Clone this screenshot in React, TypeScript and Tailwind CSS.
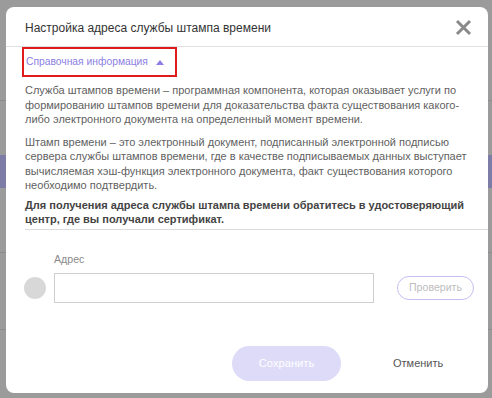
import React, { useState } from 'react';

const App: React.FC = () => {
  const [address, setAddress] = useState('');
  const [infoOpen, setInfoOpen] = useState(true);

  return (
    <div
      className="relative w-[492px] h-[398px] overflow-hidden bg-[#9b9b9b]"
      style={{ fontFamily: '"Liberation Sans", Arial, sans-serif' }}
    >
      {/* Page behind the overlay */}
      <div className="flex flex-col pt-[100px]">
        <div className="h-px bg-[#8c8c8c]" />
        <div className="h-[54px]" />
        <div className="w-full h-[33px] bg-[#7d7ca6]" />
        <div className="h-[64px]" />
        <div className="h-px bg-[#8c8c8c]" />
        <div className="h-[76px]" />
        <div className="h-px bg-[#8c8c8c]" />
      </div>

      {/* Dialog */}
      <div className="absolute left-[6px] top-[7px] w-[482px] h-[386px] bg-white rounded-[8px] flex flex-col">
        {/* Header */}
        <div className="flex items-center justify-between h-[40px] pl-[19px] pr-[16px] border-b border-[#e0e0e0]">
          <h2 className="text-[12px] text-[#333] pt-[2px]">Настройка адреса службы штампа времени</h2>
          <button className="pt-[2px]" aria-label="Закрыть">
            <svg width="17" height="17" viewBox="0 0 17 17">
              <path d="M2 2 L15 15 M15 2 L2 15" stroke="#8a8a8a" strokeWidth="3" />
            </svg>
          </button>
        </div>

        {/* Info */}
        <div className="pl-[16px] pr-[10px]">
          <button
            onClick={() => setInfoOpen(!infoOpen)}
            className="flex items-center gap-[8px] h-[30px] w-[155px] pl-[2px] border-2 border-[#e01b1b] text-[10.3px] text-[#8c7fe3]"
          >
            Справочная информация
            <svg width="8" height="5" viewBox="0 0 8 5">
              <path d="M0 5 L4 0 L8 5 Z" fill="#8c7fe3" />
            </svg>
          </button>
          {infoOpen && (
            <div className="pl-[3px] pt-[6px] text-[11px] leading-[14.5px] text-[#5f5f5f]">
              <p>
                Служба штампов времени – программная компонента, которая оказывает услуги по формированию штампов
                времени для доказательства факта существования какого-либо электронного документа на определенный
                момент времени.
              </p>
              <p className="mt-[8px]">
                Штамп времени – это электронный документ, подписанный электронной подписью сервера службы штампов
                времени, где в качестве подписываемых данных выступает вычисляемая хэш-функция электронного
                документа, факт существования которого необходимо подтвердить.
              </p>
              <p className="mt-[5px] font-bold text-[#444]">
                Для получения адреса службы штампа времени обратитесь в удостоверяющий центр, где вы получали
                сертификат.
              </p>
            </div>
          )}
        </div>
        <div className="ml-[19px] mt-[2px] h-px bg-[#dcdcdc]" />

        {/* Address */}
        <div className="flex items-end pl-[18px] pr-[14px] mt-[22px]">
          <div className="w-[22px] h-[22px] rounded-full bg-[#d8d8d8] mb-[4px]" />
          <div className="ml-[8px] flex flex-col">
            <label className="text-[10.6px] text-[#8a8a8a] mb-[6px]">Адрес</label>
            <input
              value={address}
              onChange={(e) => setAddress(e.target.value)}
              className="w-[320px] h-[30px] border border-[#cfcfcf] px-[8px] text-[11px] outline-none"
            />
          </div>
          <button className="ml-auto mb-[3px] w-[77px] h-[24px] rounded-full border border-[#c4bff0] text-[10.6px] text-[#bdbdbd]">
            Проверить
          </button>
        </div>

        {/* Footer */}
        <div className="flex items-center mt-auto mb-[12px] pl-[226px]">
          <button className="w-[109px] h-[35px] rounded-full bg-[#dddbf8] text-[11.2px] text-white">Сохранить</button>
          <button className="ml-[52px] text-[11px] text-[#555]">Отменить</button>
        </div>
      </div>
    </div>
  );
};

export default App;
